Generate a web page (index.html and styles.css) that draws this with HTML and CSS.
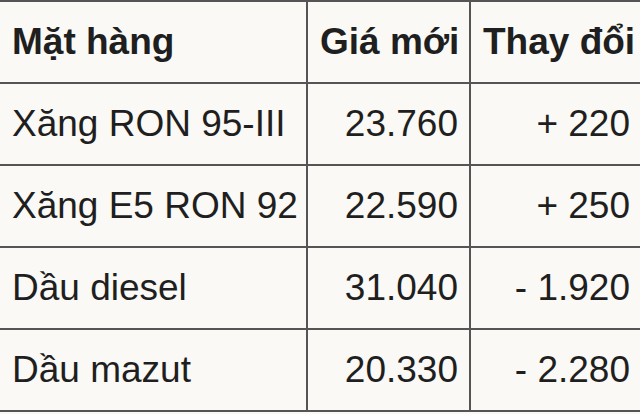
FILE: index.html
```html
<!DOCTYPE html>
<html lang="vi">
<head>
<meta charset="utf-8">
<link rel="stylesheet" href="styles.css">
</head>
<body>
<table class="price-table">
  <colgroup>
    <col class="col-name">
    <col class="col-price">
    <col class="col-change">
  </colgroup>
  <thead>
    <tr>
      <th class="left">Mặt hàng</th>
      <th class="right">Giá mới</th>
      <th class="right">Thay đổi</th>
    </tr>
  </thead>
  <tbody>
    <tr>
      <td class="left">Xăng RON 95-III</td>
      <td class="right">23.760</td>
      <td class="right">+ 220</td>
    </tr>
    <tr>
      <td class="left">Xăng E5 RON 92</td>
      <td class="right">22.590</td>
      <td class="right">+ 250</td>
    </tr>
    <tr>
      <td class="left">Dầu diesel</td>
      <td class="right">31.040</td>
      <td class="right">- 1.920</td>
    </tr>
    <tr>
      <td class="left">Dầu mazut</td>
      <td class="right">20.330</td>
      <td class="right">- 2.280</td>
    </tr>
  </tbody>
</table>
</body>
</html>
```

FILE: styles.css
```css
html, body {
  margin: 0;
  padding: 0;
  background: #faf9f5;
  overflow: hidden;
}

.price-table {
  border-collapse: separate;
  border-spacing: 0;
  table-layout: fixed;
  width: 660px;
  margin: 0;
  border-top: 2px solid #555;
  font-family: "Liberation Sans", Arial, sans-serif;
  font-size: 37px;
  color: #1f1f1f;
}

.col-name { width: 308px; }
.col-price { width: 163px; }
.col-change { width: 189px; }

.price-table th,
.price-table td {
  box-sizing: border-box;
  height: 82px;
  padding: 0 11px 0 12px;
  line-height: 40px;
  border-right: 2px solid #555;
  border-bottom: 2px solid #555;
  white-space: nowrap;
  vertical-align: middle;
}

.price-table th:last-child,
.price-table td:last-child {
  padding-right: 28px;
}

.price-table th {
  font-weight: bold;
}

.left { text-align: left; }
.right { text-align: right; }
```
